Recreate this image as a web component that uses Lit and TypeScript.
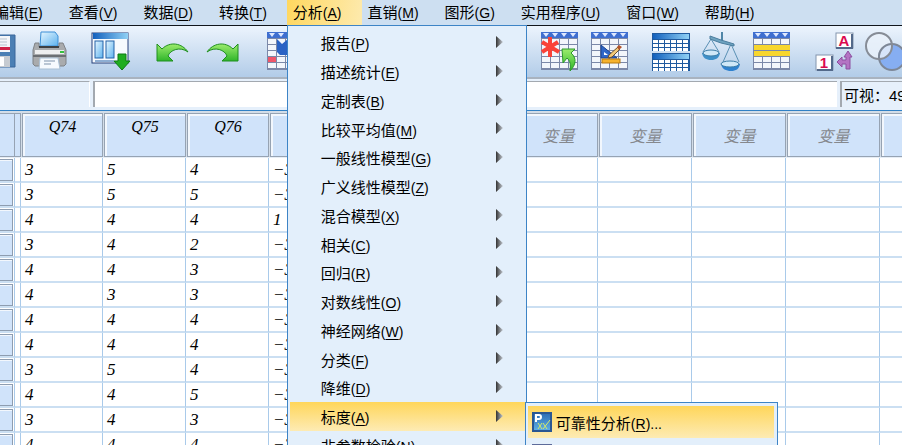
import { LitElement, html, css, svg, nothing } from "lit";
import { customElement } from "lit/decorators.js";
import { classMap } from "lit/directives/class-map.js";

type Entry = [string, string];

const MENUS: Entry[] = [
  ["编辑", "E"], ["查看", "V"], ["数据", "D"], ["转换", "T"], ["分析", "A"],
  ["直销", "M"], ["图形", "G"], ["实用程序", "U"], ["窗口", "W"], ["帮助", "H"],
];

const ANALYZE: Entry[] = [
  ["报告", "P"], ["描述统计", "E"], ["定制表", "B"], ["比较平均值", "M"],
  ["一般线性模型", "G"], ["广义线性模型", "Z"], ["混合模型", "X"], ["相关", "C"],
  ["回归", "R"], ["对数线性", "O"], ["神经网络", "W"], ["分类", "F"],
  ["降维", "D"], ["标度", "A"], ["非参数检验", "N"],
];

const COLUMNS = ["Q74", "Q75", "Q76", "", "", "", "变量", "变量", "变量", "变量", ""];
const COLUMN_WIDTHS = [15, 6, 82, 83, 83, 83, 83, 83, 80, 94, 94, 94, 94];

const ROWS = [
  ["3", "5", "4", "−3"],
  ["3", "5", "5", "−3"],
  ["4", "4", "4", "1"],
  ["3", "4", "2", "−3"],
  ["4", "4", "3", "−3"],
  ["4", "3", "3", "−3"],
  ["4", "4", "4", "−3"],
  ["4", "4", "4", "−3"],
  ["3", "5", "4", "−3"],
  ["4", "4", "5", "−3"],
  ["3", "4", "3", "−3"],
  ["4", "4", "4", "−3"],
];

const gridIcon = (extra: unknown) => svg`
  <rect x="1" y="0" width="37" height="38" fill="#7b88a8"/>
  <rect x="1" y="0" width="37" height="6" fill="#3f6fd0"/>
  ${[0, 1, 2, 3].map((c) => svg`
    <path d="M${3 + c * 9} 1h6l-3 4z" fill="#dfe9ff"/>
    ${[0, 1, 2, 3, 4].map((r) => svg`
      <rect x=${2 + c * 9} y=${7 + r * 6} width="8" height="5" fill="#f3f6fb"/>`)}`)}
  ${extra}`;

const miniTable = (y: number) => svg`
  <rect x="0" y=${y} width="38" height="18" fill="#1f5a9f"/>
  <rect x="1" y=${y + 1} width="36" height="5" fill="url(#bar)"/>
  ${[0, 1, 2, 3, 4, 5].map((c) => [0, 1, 2].map((r) => svg`
    <rect x=${1 + c * 6} y=${y + 7 + r * 4} width="5" height="3" fill="#fff"/>`))}`;

const ICONS: Record<string, unknown> = {
  save: svg`
    <path d="M2 3h33v32H5l-3-3z" fill="#4b7fb4" stroke="#3a679a"/>
    <rect x="8" y="4" width="22" height="16" fill="#f4f6f9"/>
    <path d="M11 7h16M11 10h16M11 13h16" stroke="#b9c3cf"/>
    <rect x="8" y="15" width="22" height="3" fill="#d02348"/>
    <rect x="10" y="24" width="20" height="11" fill="#c6cbd1"/>
    <rect x="19" y="25" width="5" height="9" fill="#fff"/>`,
  print: svg`
    <path d="M11 0h14l3 4v10H10z" fill="url(#sky)" stroke="#3d8fd6"/>
    <path d="M5 11h4v4h20v-4h4l3 7v14l-2 2H5l-2-2V18z" fill="#a9abad" stroke="#7f8286"/>
    <path d="M5 18h29v4H5z" fill="#eeeff0"/><path d="M3 23h33v2H3z" fill="#6c6f73"/>
    <path d="M9 15h20" stroke="#3d4043" stroke-width="2"/>
    <rect x="30" y="19" width="4" height="2" fill="#37c13f"/>
    <path d="M10 26h18l2 11H9z" fill="#f6fafe" stroke="#a9bfd4"/>
    <path d="M14 29h11M14 32h7" stroke="#7f93ab"/>`,
  variables: svg`
    <rect x="0" y="1" width="36" height="30" fill="#f7fafe" stroke="#26407b"/>
    <rect x="1" y="1" width="35" height="6" fill="url(#bar)"/>
    <rect x="3" y="9" width="8" height="17" fill="url(#sky)" stroke="#2563a8"/>
    <rect x="14" y="9" width="8" height="17" fill="url(#sky)" stroke="#2563a8"/>
    <path d="M3 29h19" stroke="#2563a8"/>
    <path d="M26 22h8v7h4l-8 9-8-9h4z" fill="#20ad20" stroke="#0d7a14"/>`,
  undo: svg`
    <path d="M3 12v17h16l-5-5c2-6 12-10 20-4C28 11 16 9 8 17z" fill="url(#leaf)" stroke="#1f8f1f"/>`,
  redo: svg`
    <path d="M34 12v17H18l5-5c-2-6-12-10-20-4C9 11 21 9 29 17z" fill="url(#leaf)" stroke="#1f8f1f"/>`,
  gotoCase: gridIcon(svg`
    <rect x="2" y="25" width="8" height="5" fill="#f0566a"/>
    <path d="M11 7l5 5 6-5h16v16H14l-3-3z" fill="#2a62c4"/>`),
  find: gridIcon(svg`
    <path d="M10 5v20M2 10l17 10M18 10L2 20" stroke="#fa4238" stroke-width="4"/>
    <path d="M22 17h13l-4 4c6 5 5 12-1 18 1-8 0-10-3-13l-4 5z" fill="url(#leaf)" stroke="#2c9a2a"/>`),
  insert: gridIcon(svg`
    <path d="M11 13v13h16z" fill="#2f66c7" stroke="#1d4390"/>
    <path d="M14 20v3h4z" fill="#fff"/>
    <path d="M19 23l9-8 2 2-8 8-4 1z" fill="#f3c978" stroke="#6b5030"/>
    <path d="M27 15l2-2 3 2-3 3z" fill="#b4532a"/>
    <rect x="12" y="27" width="18" height="4" fill="#f6b22d" stroke="#b77910"/>`),
  split: svg`${miniTable(1)}${miniTable(21)}`,
  weight: svg`
    <path d="M9 7L1 20M9 7l8 13M29 12l-8 18M29 12l8 18" stroke="#5a90b4"/>
    <path d="M20 0v11" stroke="#4f86a8" stroke-width="2"/>
    <path d="M8 4l11 4 13 4v2l-13-3L8 7z" fill="#6ea3c0" stroke="#4a7d9e"/>
    <path d="M0 21h18c-1 5-4 7-9 7s-8-2-9-7z" fill="#3d8fc8"/>
    <ellipse cx="9" cy="21" rx="8" ry="3" fill="#cfe8f8" stroke="#3d7ea8"/>
    <path d="M19 32h19c-1 5-4 7-9 7s-9-2-10-7z" fill="#2f82cf"/>
    <ellipse cx="28" cy="32" rx="9" ry="3" fill="#cfe8f8" stroke="#3d7ea8"/>`,
  select: gridIcon([0, 1, 2, 3].map((c) => svg`
    <rect x=${2 + c * 9} y="13" width="9" height="5" fill="#f8d62e"/>
    <rect x=${2 + c * 9} y="19" width="9" height="5" fill="#f8d62e"/>`)),
  labels: svg`
    <rect x="22" y="1" width="17" height="15" fill="#fff" stroke="#8495ad"/>
    <path d="M38 2v14H22" stroke="#53698a" stroke-width="2"/>
    <text class="glyph" x="30" y="14" text-anchor="middle">A</text>
    <rect x="2" y="23" width="17" height="15" fill="#fff" stroke="#8495ad"/>
    <path d="M18 24v14H3" stroke="#53698a" stroke-width="2"/>
    <text class="glyph" x="10" y="36" text-anchor="middle">1</text>
    <path d="M34 19l4 6h-2v12h-4v-5h-4v3l-5-5 5-5v3h4v-3h-2z" fill="#b473c4" stroke="#8d4fa0"/>`,
  sets: svg`
    <circle cx="28" cy="25" r="13" fill="#86aef2" stroke="#7d8797" stroke-width="2"/>
    <circle cx="15" cy="14" r="13" fill="#eaf1fa" fill-opacity=".8" stroke="#868c96" stroke-width="2"/>
    <path d="M27 12a13 13 0 0 0-12 14" stroke="#7d8797" stroke-width="2"/>`,
};

const TOOLBAR: [string, string][][] = [
  [["save", "保存"], ["print", "打印"]],
  [["variables", "变量"]],
  [["undo", "撤销"], ["redo", "重做"]],
  [["gotoCase", "转到个案"], ["", "转到变量"]],
  [["", "描述"], ["", "运行"], ["", "查找"]],
  [["find", "插入个案"], ["insert", "插入变量"]],
  [["split", "拆分文件"], ["weight", "加权"], ["select", "选择个案"]],
  [["labels", "值标签"], ["sets", "变量集"]],
];

const gradients = svg`
  <defs>
    <linearGradient id="bar"><stop stop-color="#1260bd"/><stop offset="1" stop-color="#8fd0f5"/></linearGradient>
    <linearGradient id="sky" x2="1" y2="1"><stop stop-color="#e6f6ff"/><stop offset="1" stop-color="#5db2ee"/></linearGradient>
    <linearGradient id="leaf" x2="0" y2="1"><stop stop-color="#9cec6d"/><stop offset="1" stop-color="#2fb52a"/></linearGradient>
  </defs>`;

const label = ([text, key]: Entry, tail = "") =>
  html`<span>${text}<span class="accel">(<u>${key}</u>)${tail}</span></span>`;

const shared = css`
  :host { display: block; }
  * { box-sizing: border-box; }
  button {
    font: inherit; color: inherit; background: none; border: 0; margin: 0; padding: 0;
    display: flex; align-items: center; white-space: nowrap; text-align: left;
  }
  ul { list-style: none; margin: 0; padding: 0; }
  .accel { font-size: 14px; }
  u { text-underline-offset: 2px; }
`;

@customElement("analyze-menu")
class AnalyzeMenu extends LitElement {
  static styles = [shared, css`
    .panel {
      width: 240px; padding: 2px 0 0 2px; background: #e3effb;
      border: 1px solid #3d84c6;
    }
    .row { position: relative; height: 29px; }
    .row:nth-child(4n) { height: 28px; }
    .entry { width: 100%; height: 100%; padding: 0 23px 0 31px; justify-content: space-between; }
    .active, .choice { background: linear-gradient(#ffd65a, #fdebb4); }
    .arrow { margin-bottom: 2px; }
    .flyout {
      position: absolute; top: 0; left: 235px; width: 253px; padding: 3px 3px 0 2px;
      background: #e3effb; border: 1px solid #3d84c6;
    }
    .choice, .next { width: 100%; height: 32px; gap: 4px; padding: 0 4px; }
  `];

  private arrow() {
    return html`<svg class="arrow" width="7" height="12" viewBox="0 0 7 12" aria-hidden="true">
      <defs><linearGradient id="tip"><stop stop-color="#333"/><stop offset="1" stop-color="#c4cad2"/></linearGradient></defs>
      <path d="M0 0l7 6-7 6z" fill="url(#tip)"/></svg>`;
  }

  private flyout() {
    return html`<ul class="flyout" role="menu">
      <li><button class="choice" role="menuitem">
        <svg width="20" height="20" viewBox="0 0 20 20" aria-hidden="true">
          <defs><linearGradient id="tile" x2="0" y2="1"><stop stop-color="#2d6cb4"/><stop offset="1" stop-color="#5fb2e6"/></linearGradient></defs>
          <rect x="1" y="1" width="18" height="18" fill="url(#tile)" stroke="#2a5793" stroke-width="2"/>
          <path d="M4 10V3h3a2 2 0 0 1 0 4H4" fill="none" stroke="#fff" stroke-width="2"/>
          <path d="M6 11l4 6M10 11l-4 6M11 11l4 6M18 8l-7 9" stroke="#d2e86a" fill="none"/>
        </svg>${label(["可靠性分析", "R"], "...")}</button></li>
      <li><button class="next" role="menuitem" aria-label="多维">
        <svg width="20" height="20" viewBox="0 0 20 20" aria-hidden="true">
          <rect x="1" y="1" width="18" height="18" fill="#dce6f3" stroke="#5d6b9a" stroke-width="2"/>
          <path d="M9 1v18M1 8h18" stroke="#5d6b9a"/></svg></button></li>
    </ul>`;
  }

  render() {
    return html`<ul class="panel" role="menu">${ANALYZE.map((entry) => {
      const active = entry[0] === "标度";
      return html`<li class="row">
        <button class=${classMap({ entry: true, active })} role="menuitem" aria-haspopup="true">
          ${label(entry)}${this.arrow()}</button>
        ${active ? this.flyout() : nothing}</li>`;
    })}</ul>`;
  }
}

@customElement("tool-bar")
class ToolBar extends LitElement {
  static styles = [shared, css`
    :host { overflow: hidden; }
    .bar {
      display: flex; gap: 24px; align-items: center; height: 53px; margin-left: -20px;
      background: linear-gradient(#ecf4fd, #b2cce8); border-bottom: 2px solid #a9b3bf;
    }
    .group { display: flex; gap: 12px; flex: none; }
    .tool { width: 38px; height: 40px; }
    .art { overflow: visible; }
    .glyph { font: bold 15px "Liberation Sans", sans-serif; fill: #dc0a50; }
  `];

  render() {
    return html`<div class="bar" role="toolbar" aria-label="工具">${TOOLBAR.map((group) => html`
      <div class="group">${group.map(([icon, name]) => html`
        <button class="tool" aria-label=${name}>
          <svg class="art" width="38" height="40" viewBox="0 0 38 40" fill="none" aria-hidden="true">${gradients}${ICONS[icon] ?? nothing}</svg>
        </button>`)}</div>`)}</div>`;
  }
}

@customElement("data-grid")
class DataGrid extends LitElement {
  static styles = [shared, css`
    :host { overflow: hidden; }
    table { width: 100%; table-layout: fixed; border-collapse: separate; border-spacing: 0; }
    th, td { padding: 0; font-weight: normal; background: #fff; }
    thead th { height: 45px; background: #d3dde8; border-bottom: 1px solid #e6edf5; }
    .cap {
      display: flex; justify-content: center; height: 44px; margin: 0 0 0 1px;
      padding: 4px 0; line-height: 20px; font: italic 16px "Liberation Serif", serif;
      background: #d0e3fa; border: 1px solid #96a3b3; box-shadow: inset 1px 1px 0 1px #f2f7fd;
    }
    .edge { margin: 0; border-left: 0; box-shadow: none; }
    .blank { align-items: center; color: #85888d; font-family: "Noto Sans CJK SC", sans-serif; }
    td, tbody th { height: 25px; border-right: 1px solid #a9caea; border-bottom: 2px solid #cbdff2; }
    td { padding-left: 4px; font: italic 17px "Liberation Serif", serif; line-height: 20px; color: #000; }
    .knob {
      height: 22px; margin: 1px 1px 0 0; background: #d0e3fa; border: 1px solid #8e9db0;
      border-left: 0; box-shadow: inset 0 1px 0 #f2f7fd;
    }
  `];

  render() {
    return html`<table>
      <colgroup>${COLUMN_WIDTHS.map((w) => html`<col width=${w}>`)}</colgroup>
      <thead><tr>
        <th><div class="cap edge"></div></th>
        <th><div class="cap edge"></div></th>
        ${COLUMNS.map((name) => html`<th scope="col">
          <div class=${classMap({ cap: true, blank: name === "变量" })}>${name}</div></th>`)}
      </tr></thead>
      <tbody>${ROWS.map((row) => html`<tr>
        <th scope="row"><div class="knob"></div></th><td></td>
        ${COLUMNS.map((_, i) => html`<td>${row[i] ?? ""}</td>`)}</tr>`)}
      </tbody></table>`;
  }
}

@customElement("app-root")
class AppRoot extends LitElement {
  static styles = [shared, css`
    :host {
      display: flex; flex-direction: column; height: 100vh; overflow: hidden;
      background: #e6f0fb; color: #000;
      font: 15px "Liberation Sans", "Noto Sans CJK SC", sans-serif;
    }
    .menus { height: 26px; background: #cddff1; border-bottom: 1px solid #10151c; }
    .list { display: flex; margin-left: -12px; }
    .item { position: relative; flex: none; }
    .top { height: 25px; padding: 0 20px 2px 6px; }
    .open { background: linear-gradient(100deg, #ffd75f, #fdeaae); }
    .drop { position: absolute; z-index: 2; top: 25px; left: 0; }
    .fields { display: flex; gap: 3px; height: 32px; padding: 2px 0 3px; border-bottom: 1px solid #2f80c5; }
    .name, .value, .visible { border: 0 solid #a3a9b0; border-top-width: 1px; }
    .name { flex: 0 0 90px; border-right: 1px solid #fff; }
    .value { flex: 1; min-width: 0; padding: 0 4px; background: #fff; border-left: 2px solid #a3a9b0; border-radius: 0; outline: 0; font: inherit; }
    .visible { flex: 0 0 62px; padding-left: 2px; line-height: 28px; border-left-width: 2px; white-space: nowrap; overflow: hidden; }
    .sheet { flex: 1; min-height: 0; padding-top: 2px; background: #d3dde8; }
  `];

  render() {
    return html`
      <nav class="menus" aria-label="菜单"><ul class="list">${MENUS.map((entry) => {
        const open = entry[0] === "分析";
        return html`<li class="item">
          <button class=${classMap({ top: true, open })} aria-haspopup="true">${label(entry)}</button>
          ${open ? html`<analyze-menu class="drop"></analyze-menu>` : nothing}</li>`;
      })}</ul></nav>
      <tool-bar></tool-bar>
      <div class="fields">
        <div class="name"></div>
        <input class="value" aria-label="值">
        <div class="visible">可视：49</div>
      </div>
      <data-grid class="sheet"></data-grid>`;
  }
}
